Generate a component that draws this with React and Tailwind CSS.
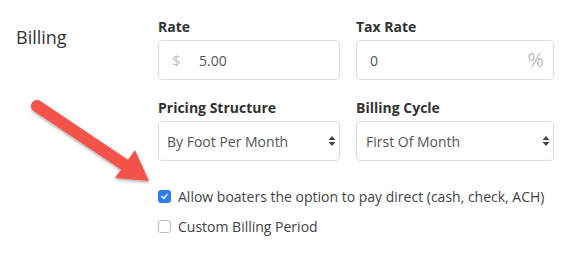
import React from "react";

function Chevrons() {
  return (
    <svg width="8" height="12" viewBox="0 0 8 12" className="shrink-0">
      <path d="M4 1 L7.5 5 L0.5 5 Z" fill="#444" />
      <path d="M4 11 L7.5 7 L0.5 7 Z" fill="#444" />
    </svg>
  );
}

export default function App() {
  return (
    <div
      className="relative w-[573px] h-[254px] bg-white text-[#333] overflow-hidden"
      style={{ fontFamily: '"Open Sans", sans-serif' }}
    >
      <div className="flex pl-4 pt-[17px]">
        <div className="w-[142px] text-[18px] leading-[26px] pt-[7px] text-[#333]">Billing</div>
        <div className="flex flex-col">
          <div className="grid grid-cols-[182px_198px] gap-x-4">
            <div>
              <div className="text-[14px] font-bold leading-[20px] text-[#333]">Rate</div>
              <div className="mt-[3px] h-[40px] flex items-center border border-[#dcdcdc] rounded-[4px] px-[13px] text-[14px] text-[#555]">
                <span className="text-[#c4c4c4] text-[15px] w-[27px]">$</span>
                <span>5.00</span>
              </div>
            </div>
            <div>
              <div className="text-[14px] font-bold leading-[20px] text-[#333]">Tax Rate</div>
              <div className="mt-[3px] h-[40px] flex items-center justify-between border border-[#dcdcdc] rounded-[4px] pl-[13px] pr-[9px] text-[14px] text-[#555]">
                <span>0</span>
                <span className="text-[#bdbdbd] text-[20px] leading-[20px]">%</span>
              </div>
            </div>
            <div className="mt-[18px]">
              <div className="text-[14px] font-bold leading-[20px] text-[#333]">Pricing Structure</div>
              <div className="mt-[3px] h-[40px] flex items-center justify-between border border-[#dcdcdc] rounded-[4px] pl-[8px] pr-[3px] text-[14px] text-[#555]">
                <span>By Foot Per Month</span>
                <Chevrons />
              </div>
            </div>
            <div className="mt-[18px]">
              <div className="text-[14px] font-bold leading-[20px] text-[#333]">Billing Cycle</div>
              <div className="mt-[3px] h-[40px] flex items-center justify-between border border-[#dcdcdc] rounded-[4px] pl-[9px] pr-[3px] text-[14px] text-[#555]">
                <span>First Of Month</span>
                <Chevrons />
              </div>
            </div>
          </div>
          <div className="mt-[25px] flex flex-col gap-[10px]">
            <label className="flex items-center gap-[7px] h-[20px] text-[14px] text-[#444]">
              <span className="w-[13px] h-[13px] rounded-[3px] bg-[#2f7cf6] flex items-center justify-center">
                <svg width="9" height="9" viewBox="0 0 9 9">
                  <path d="M1.8 4.6 L3.7 6.5 L7.2 2.4" stroke="white" strokeWidth="1.4" fill="none" strokeLinecap="round" strokeLinejoin="round" />
                </svg>
              </span>
              Allow boaters the option to pay direct (cash, check, ACH)
            </label>
            <label className="flex items-center gap-[7px] h-[20px] text-[14px] text-[#444]">
              <span className="w-[13px] h-[13px] rounded-[3px] border border-[#bbb] bg-white" />
              Custom Billing Period
            </label>
          </div>
        </div>
      </div>
      <svg className="absolute left-0 top-0" width="573" height="254" style={{ pointerEvents: "none" }}>
        <defs>
          <filter id="sh" x="-20%" y="-20%" width="140%" height="140%">
            <feDropShadow dx="0" dy="1.5" stdDeviation="1.5" floodColor="#000" floodOpacity="0.35" />
          </filter>
        </defs>
        <g filter="url(#sh)" fill="#f4524a">
          <line x1="37" y1="106" x2="125" y2="165" stroke="#f4524a" strokeWidth="12" strokeLinecap="round" />
          <polygon points="135,150 149,181 115,178" />
        </g>
      </svg>
    </div>
  );
}
